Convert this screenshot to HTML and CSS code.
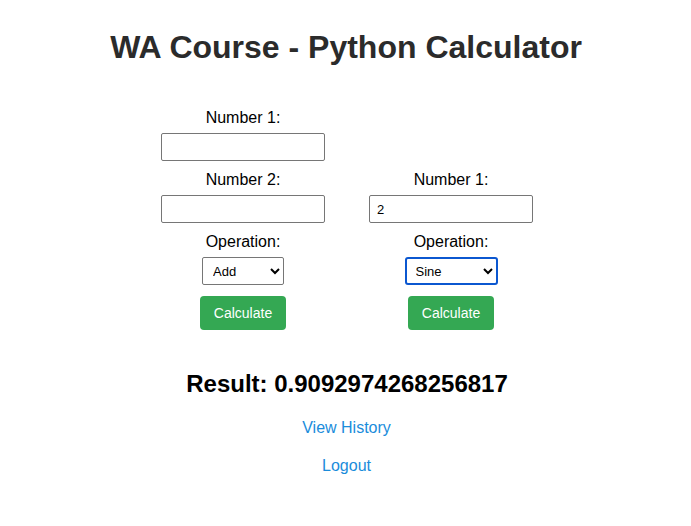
FILE: index.html
```html
<!DOCTYPE html>
<html>
<head>
<meta charset="utf-8">
<title>Python Calculator</title>
<link rel="stylesheet" href="styles.css">
</head>
<body>
<h1 class="title">WA Course - Python Calculator</h1>
<div class="forms">
  <form class="calc">
    <div class="field">
      <label class="label">Number 1:</label>
      <input class="num" type="text">
    </div>
    <div class="field">
      <label class="label">Number 2:</label>
      <input class="num" type="text">
    </div>
    <div class="field">
      <label class="label">Operation:</label>
      <select class="op op-basic"><option>Add</option></select>
    </div>
    <button class="btn" type="button">Calculate</button>
  </form>
  <form class="calc">
    <div class="field">
      <label class="label">Number 1:</label>
      <input class="num" type="text" value="2">
    </div>
    <div class="field">
      <label class="label">Operation:</label>
      <select class="op op-sci focused"><option>Sine</option></select>
    </div>
    <button class="btn" type="button">Calculate</button>
  </form>
</div>
<h2 class="result">Result: 0.9092974268256817</h2>
<p class="link-row"><a class="link" href="#">View History</a></p>
<p class="link-row"><a class="link" href="#">Logout</a></p>
</body>
</html>
```
FILE: styles.css
```css
body {
  margin: 8px;
  font-family: "Liberation Sans", Arial, sans-serif;
  font-size: 16px;
  color: #000;
  background: #fff;
  text-align: center;
}
.title {
  font-size: 32px;
  font-weight: bold;
  color: #2b2b2b;
  margin: 21px 0;
  padding-left: 1px;
}
.forms {
  display: flex;
  justify-content: center;
  align-items: flex-end;
  gap: 44px;
  margin-top: 43px;
  padding-left: 3px;
}
.calc {
  display: flex;
  flex-direction: column;
  align-items: center;
  width: 164px;
}
.field {
  display: flex;
  flex-direction: column;
  align-items: center;
  margin-bottom: 10px;
}
.label {
  display: block;
  line-height: 18px;
  margin-bottom: 6px;
}
.num {
  box-sizing: border-box;
  width: 164px;
  height: 28px;
  border: 1px solid #767676;
  border-radius: 2px;
  padding: 1px 7px;
  font-family: "Liberation Sans", Arial, sans-serif;
  font-size: 13px;
  color: #000;
  background: #fff;
}
.op {
  box-sizing: border-box;
  height: 28px;
  border: 1px solid #767676;
  border-radius: 2px;
  padding: 0 4px 0 6px;
  font-family: "Liberation Sans", Arial, sans-serif;
  font-size: 13px;
  color: #000;
  background: #fff;
}
.op-basic { width: 82px; }
.op-sci { width: 93px; }
.focused {
  border: 2px solid #0b57d0;
  border-radius: 3px;
  padding-left: 5px;
}
.btn {
  box-sizing: border-box;
  width: 86px;
  height: 34px;
  margin-top: 1px;
  background: #34a853;
  color: #fff;
  border: none;
  border-radius: 4px;
  font-family: "Liberation Sans", Arial, sans-serif;
  font-size: 14px;
}
.result {
  font-size: 24px;
  font-weight: bold;
  margin: 40px 0 21px;
  padding-left: 3px;
}
.link-row {
  margin: 20px 0;
  line-height: 18px;
  padding-left: 2px;
}
.link {
  color: #1a8cdb;
  text-decoration: none;
}
```
